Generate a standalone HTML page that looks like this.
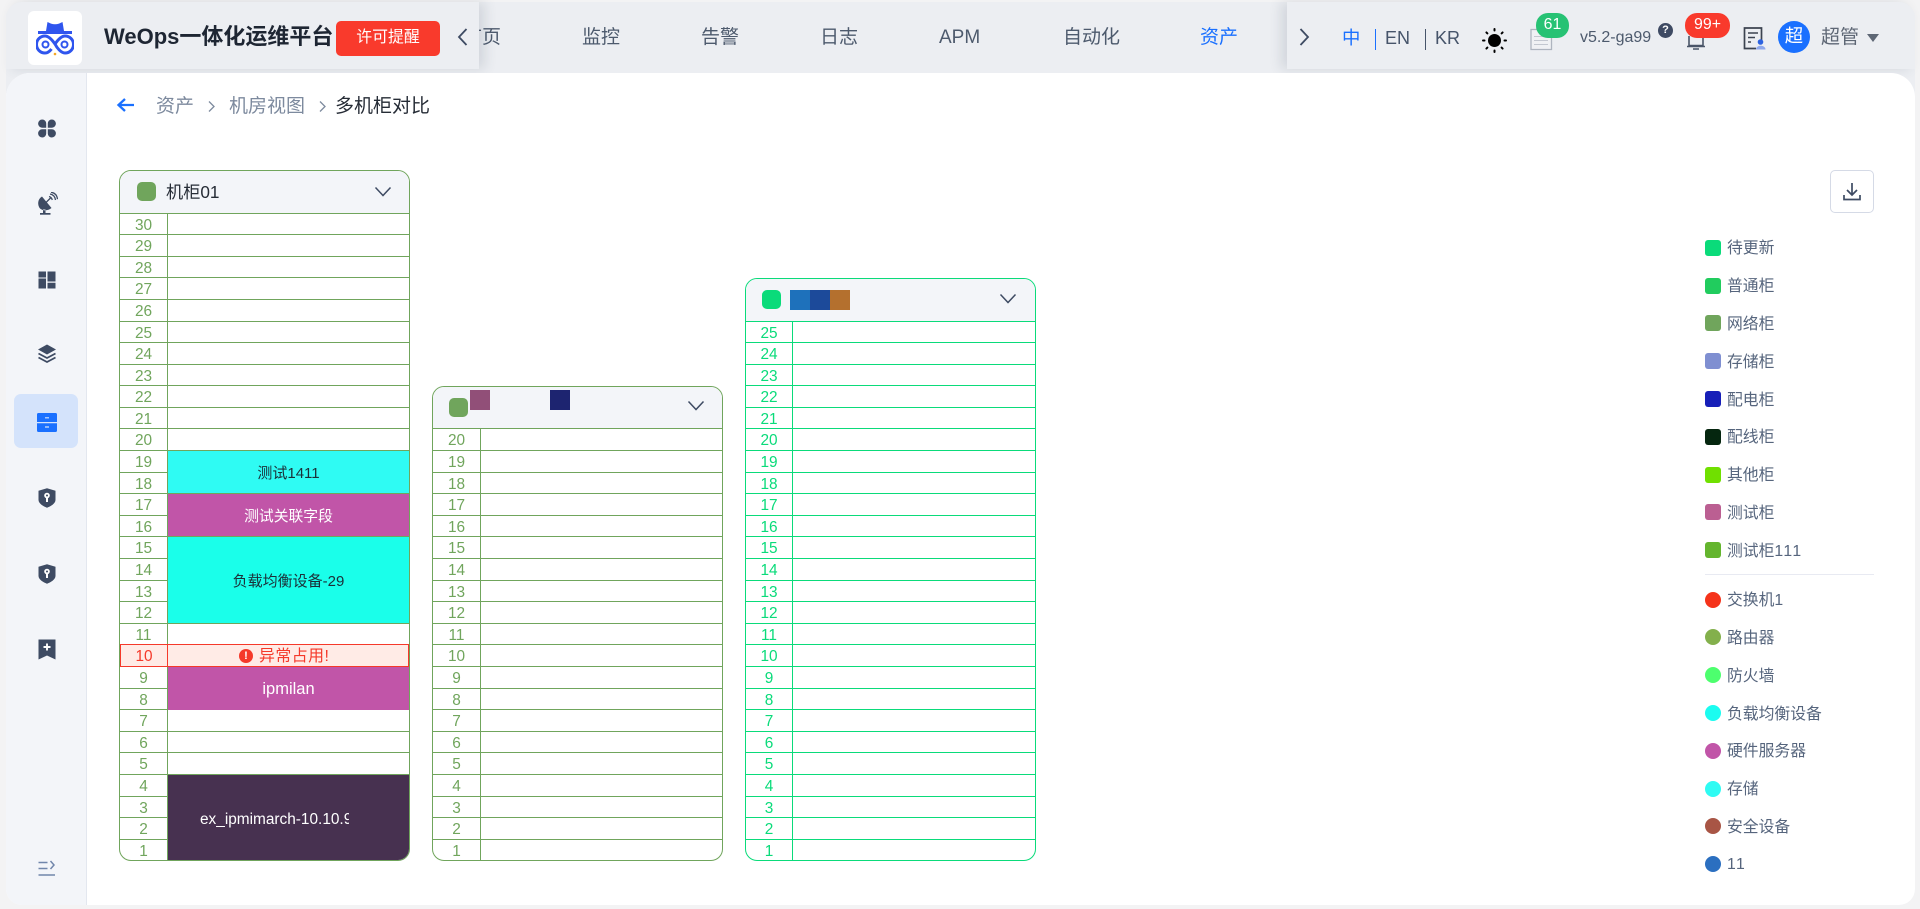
<!DOCTYPE html>
<html lang="zh-CN">
<head>
<meta charset="utf-8">
<title>WeOps</title>
<style>
*{box-sizing:border-box;margin:0;padding:0}
html,body{width:1920px;height:909px;overflow:hidden;background:#f3f3f4;font-family:"Liberation Sans","Noto Sans CJK SC",sans-serif}
.abs,.t,svg.i{position:absolute}
.t{white-space:nowrap;line-height:24px;height:24px}
#frame{position:absolute;left:6px;top:2px;width:1909px;height:903px;background:#eceef2;border-radius:16px;overflow:hidden}
#content{position:absolute;left:6px;top:73px;width:1909px;height:832px;background:#fff;border-radius:24px 24px 16px 16px;overflow:hidden}
#side{position:absolute;left:0;top:0;width:81px;height:100%;background:#f3f5f9;border-right:1px solid #e3e7ef}
.panel{position:absolute;top:2px;height:67px;background:#eceef2}
.nav{font-size:19px;color:#4d5a6d;top:26px}
.cab{position:absolute;width:291px;border:1px solid #70a55c;border-radius:12px;overflow:hidden;background:#fff;color:#70a55c;font-size:15.4px}
.cab.g{border-color:#0adb7a;color:#0adb7a}
.h{height:43px;background:#f3f5f9;border-bottom:1px solid #70a55c;position:relative}
.g .h{border-color:#0adb7a}
.r{display:block;border-bottom:1px solid #70a55c}
.g .r{border-color:#0adb7a}
.a{height:21px}.b{height:22px}
.r b{display:block;font-weight:400;width:48px;height:100%;border-right:1px solid #70a55c;text-align:center;line-height:24px;overflow:hidden}
.g .r b{width:47px;border-color:#0adb7a}
.r:last-child{border-bottom:0}
.sw{position:absolute;width:19px;height:19px;border-radius:5px}
.sq{position:absolute;width:20px;height:20px}
.d{position:absolute;left:48px;width:241px;display:flex;align-items:center;justify-content:center;font-size:15px;color:#1c2f38}
.w{color:#fff}
.lg{position:absolute;left:1705px;width:16px;height:16px;border-radius:3px}
.c{border-radius:50%}
.lt{position:absolute;left:1727px;font-size:15.8px;color:#56657d;line-height:22px;height:22px;white-space:nowrap;margin-top:1px}
.lt i{font-style:normal;letter-spacing:1.4px}
.ic{fill:#3e4b63}
</style>
</head>
<body>
<div id="frame"></div>

<!-- nav items -->
<span class="t nav" style="left:479px;width:22px;overflow:hidden;direction:rtl">首页</span>
<span class="t nav" style="left:582px">监控</span>
<span class="t nav" style="left:701px">告警</span>
<span class="t nav" style="left:820px">日志</span>
<span class="t nav" style="left:939px">APM</span>
<span class="t nav" style="left:1063px">自动化</span>
<span class="t nav" style="left:1200px;color:#1a70ff">资产</span>

<!-- left header panel -->
<div class="panel" style="left:6px;width:473px;box-shadow:6px 0 12px rgba(60,70,90,.14);border-radius:16px 0 0 0"></div>
<div class="abs" style="left:28px;top:11px;width:54px;height:54px;background:#fff;border-radius:6px"></div>
<svg class="i" style="left:36px;top:20px" width="38" height="36" viewBox="0 0 38 36">
<path fill="#2f55ee" d="M10 11 11.500 2 15 3.600Q19 5 23 3.600L26.500 2 28 11Z"/>
<path fill="#2f55ee" d="M2 11H36V14H2Z"/>
<path fill="none" stroke="#2f55ee" stroke-width="3" d="M19 24C15.500 19 12.500 16 9 16A8.500 8.500 0 0 0 9 33C12 33 14 31 15.500 29M19 24C22.500 19 25.500 16 29 16A8.500 8.500 0 0 1 29 33C25 33 21 28 19 24Z"/>
<circle cx="9.500" cy="24.500" r="3" fill="none" stroke="#2f55ee" stroke-width="2"/>
<circle cx="28.500" cy="24.500" r="3" fill="none" stroke="#2f55ee" stroke-width="2"/>
<circle cx="19" cy="34" r="1.300" fill="#f5a623"/>
</svg>
<span class="t" style="left:104px;top:24px;font-size:22px;font-weight:700;color:#1e2633;line-height:26px;height:26px">WeOps一体化运维平台</span>
<div class="abs" style="left:336px;top:21px;width:104px;height:35px;background:#f93a2c;border-radius:5px;color:#fff;font-size:15.900px;line-height:34px;text-align:center">许可提醒</div>
<svg class="i" style="left:456px;top:27px" width="14" height="20" viewBox="0 0 14 20"><path d="M10.500 2 3 10l7.500 8" fill="none" stroke="#3e4b63" stroke-width="1.800"/></svg>

<!-- right header panel -->
<div class="panel" style="left:1287px;width:628px;box-shadow:-6px 0 12px rgba(60,70,90,.14);border-radius:0 16px 0 0"></div>
<svg class="i" style="left:1297px;top:27px" width="14" height="20" viewBox="0 0 14 20"><path d="M3.500 2 11 10l-7.500 8" fill="none" stroke="#3e4b63" stroke-width="1.800"/></svg>
<span class="t" style="left:1342px;top:26px;font-size:18.400px;color:#1a70ff">中</span>
<div class="abs" style="left:1375px;top:29px;width:1px;height:21px;background:#1a70ff"></div>
<span class="t" style="left:1385px;top:26px;font-size:18px;color:#46546a">EN</span>
<div class="abs" style="left:1425px;top:29px;width:1px;height:21px;background:#46546a"></div>
<span class="t" style="left:1435px;top:26px;font-size:18px;color:#46546a">KR</span>
<svg class="i" style="left:1482px;top:28px" width="25" height="25" viewBox="0 0 25 25">
<circle cx="12.500" cy="12.500" r="6.500" fill="#000"/>
<g stroke="#000" stroke-width="2" stroke-linecap="round"><path d="M12.500 1v1.500M12.500 22.500V24M1 12.500h1.500M22.500 12.500H24M4.400 4.400l1 1M19.600 19.600l1 1M4.400 20.600l1-1M19.600 5.400l1-1"/></g>
</svg>
<svg class="i" style="left:1530px;top:27px" width="23" height="24" viewBox="0 0 23 24">
<path d="M1 2.500h20.500v20H1Z" fill="#f0f1f4" stroke="#aeb4bf" stroke-width="1.300"/>
<path d="M4 9.500h14M4 13.500h14M4 17.500h14" stroke="#c3c7d0" stroke-width="1"/>
</svg>
<div class="abs" style="left:1536px;top:13px;width:33px;height:25px;background:#27c274;border-radius:12px;color:#fff;font-size:15.900px;line-height:24px;text-align:center">61</div>
<span class="t" style="left:1580px;top:26px;font-size:16px;color:#4d5a6d">v5.2-ga99</span>
<div class="abs" style="left:1658px;top:23px;width:15px;height:15px;background:#3e4a63;border-radius:50%;color:#fff;font-size:11px;line-height:15px;text-align:center;font-weight:700">?</div>
<svg class="i" style="left:1686px;top:36px" width="20" height="14" viewBox="0 0 20 14">
<path d="M3 0v9.500h14V0" fill="none" stroke="#4a5568" stroke-width="1.600"/><path d="M1 10.500h18M7 13h6" stroke="#4a5568" stroke-width="1.500"/>
</svg>
<div class="abs" style="left:1685px;top:13px;width:45px;height:25px;background:#f93a2c;border-radius:12px;color:#fff;font-size:15.900px;line-height:24px;text-align:center">99+</div>
<svg class="i" style="left:1743px;top:26px" width="23" height="24" viewBox="0 0 23 24">
<path d="M18.500 14V2H1.500V22.500H13" fill="none" stroke="#3c4350" stroke-width="1.700"/>
<path d="M5 7h10M5 11.500h7M5 16h3" stroke="#3c4350" stroke-width="1.500"/>
<circle cx="17.500" cy="16" r="2.800" fill="#2c62e0"/><path d="M13 23.500c0-5 9.500-5 9.500 0Z" fill="#8fa8ec"/>
</svg>
<div class="abs" style="left:1778px;top:21px;width:32px;height:32px;background:#1a70ff;border-radius:50%;color:#fff;font-size:18.400px;line-height:30px;text-align:center">超</div>
<span class="t" style="left:1821px;top:26px;font-size:19px;color:#5e6775">超管</span>
<svg class="i" style="left:1867px;top:34px" width="12" height="8" viewBox="0 0 12 8"><path d="M0 0h12L6 8Z" fill="#5e6775"/></svg>

<!-- content -->
<div id="content"><div id="side"></div></div>
<div class="abs" style="left:14px;top:394px;width:64px;height:54px;background:#d4e3fb;border-radius:7px"></div>

<!-- sidebar icons -->
<svg class="i" style="left:38px;top:119px" width="18" height="19" viewBox="0 0 18 19">
<path class="ic" d="M4.200 .5A4 4 0 0 0 4.200 8.700H8.200V4.500A4 4 0 0 0 4.200 .5ZM13.800 .5A4 4 0 0 1 13.800 8.700H9.800V4.500A4 4 0 0 1 13.800 .5ZM4.200 18.500A4 4 0 0 1 4.200 10.300H8.200V14.500A4 4 0 0 1 4.200 18.500ZM13.800 18.500A4 4 0 0 0 13.800 10.300H9.800V14.500A4 4 0 0 0 13.800 18.500Z"/>
</svg>
<svg class="i" style="left:37px;top:192px" width="21" height="24" viewBox="0 0 21 24">
<path class="ic" d="M5 4.500C.5 7 .200 13 3 16.500C6 19 11 19 14.500 16ZM6 17.500h2.500V21H6Z"/>
<path class="ic" d="M3 21h10.500v1.700H3Z"/>
<path d="M8.500 11 14 5.500M13 2C16 2.500 18 4.500 18.500 8M14 .2C18 .8 20 3 20.500 7.200M12 4.500C13.500 4.800 14.800 5.800 15.200 8" fill="none" stroke="#3e4b63" stroke-width="1.300"/>
</svg>
<svg class="i" style="left:38px;top:271px" width="18" height="18" viewBox="0 0 18 18">
<path class="ic" d="M.5 .5h7.500v6H.5ZM.5 7.500h7.500V17.500H.5ZM9.500 .5H17.500V10.500H9.500ZM9.500 11.800H17.500V17.500H9.500Z"/>
</svg>
<svg class="i" style="left:37px;top:344px" width="20" height="20" viewBox="0 0 20 20">
<path class="ic" d="M10 .5 19 5.500 10 10.500 1 5.500Z"/>
<path d="M1.500 9.500 10 14 18.500 9.500M1.500 13.500 10 18 18.500 13.500" fill="none" stroke="#3e4b63" stroke-width="1.700"/>
</svg>
<svg class="i" style="left:37px;top:413px" width="20" height="20" viewBox="0 0 20 20">
<path fill="#1a70ff" d="M1.500 0H18.500A1.500 1.500 0 0 1 20 1.500V9H0V1.500A1.500 1.500 0 0 1 1.500 0ZM0 10.200H20V17.500A1.500 1.500 0 0 1 18.500 19H1.500A1.500 1.500 0 0 1 0 17.500Z"/>
<path d="M8 4.800h4M8 14h4" stroke="#d4e3fb" stroke-width="1.200"/>
</svg>
<svg class="i" style="left:38px;top:488px" width="18" height="20" viewBox="0 0 18 20">
<path class="ic" d="M9 .3 17.500 2.800V12C17.500 15.500 12.500 18.500 9 19.700 5.500 18.500.5 15.500.5 12V2.800Z"/>
<circle cx="9" cy="7.500" r="2.800" fill="#fff"/><path d="M8 9h2v5H8Z" fill="#fff"/><circle cx="9" cy="7.500" r="1" fill="#3e4b63"/>
</svg>
<svg class="i" style="left:38px;top:564px" width="18" height="20" viewBox="0 0 18 20">
<path class="ic" d="M9 .3 17.500 2.800V12C17.500 15.500 12.500 18.500 9 19.700 5.500 18.500.5 15.500.5 12V2.800Z"/>
<circle cx="9" cy="7.500" r="2.800" fill="#fff"/><path d="M8 9h2v5H8Z" fill="#fff"/><circle cx="9" cy="7.500" r="1" fill="#3e4b63"/>
</svg>
<svg class="i" style="left:38px;top:639px" width="18" height="21" viewBox="0 0 18 21">
<path class="ic" d="M.5 .5H17.500V20.500L9 16.500 .5 20.500Z"/>
<path d="M9 4.500v7M5.500 8h7" stroke="#fff" stroke-width="1.900"/>
</svg>
<svg class="i" style="left:38px;top:860px" width="18" height="17" viewBox="0 0 18 17">
<path d="M.5 2.500h9M.5 8.500h9M.5 15h16.500M12.500 1 16 5 12.500 9" fill="none" stroke="#7186ab" stroke-width="1.500"/>
</svg>

<!-- breadcrumb -->
<svg class="i" style="left:116px;top:96px" width="19" height="18" viewBox="0 0 19 18"><path d="M18 9H3M9 3 2.500 9 9 15" fill="none" stroke="#1a70ff" stroke-width="2.300"/></svg>
<span class="t" style="left:156px;top:95px;font-size:19px;color:#7d8a9e">资产</span>
<svg class="i" style="left:207px;top:100px" width="9" height="13" viewBox="0 0 9 13"><path d="M2 1.500 7 6.500 2 11.500" fill="none" stroke="#7d8a9e" stroke-width="1.300"/></svg>
<span class="t" style="left:229px;top:95px;font-size:19px;color:#7d8a9e">机房视图</span>
<svg class="i" style="left:318px;top:100px" width="9" height="13" viewBox="0 0 9 13"><path d="M2 1.500 7 6.500 2 11.500" fill="none" stroke="#7d8a9e" stroke-width="1.300"/></svg>
<span class="t" style="left:335px;top:95px;font-size:19px;color:#262c36">多机柜对比</span>

<!-- cabinet 1 -->
<div class="cab" style="left:119px;top:170px;height:691px">
<div class="h"><span class="sw" style="left:17px;top:11px;background:#70a55c"></span>
<span class="t" style="left:46px;top:9px;font-size:17.200px;color:#262c36">机柜01</span>
<svg class="i" style="left:254px;top:15px" width="18" height="12" viewBox="0 0 18 12"><path d="M1.500 1.500 9 9.500 16.500 1.500" fill="none" stroke="#3e4b63" stroke-width="1.500"/></svg></div>
<div class="r a"><b>30</b></div><div class="r b"><b>29</b></div><div class="r a"><b>28</b></div><div class="r b"><b>27</b></div><div class="r b"><b>26</b></div><div class="r a"><b>25</b></div><div class="r b"><b>24</b></div><div class="r a"><b>23</b></div><div class="r b"><b>22</b></div><div class="r a"><b>21</b></div><div class="r b"><b>20</b></div><div class="r b"><b>19</b></div><div class="r a"><b>18</b></div><div class="r b"><b>17</b></div><div class="r a"><b>16</b></div><div class="r b"><b>15</b></div><div class="r b"><b>14</b></div><div class="r a"><b>13</b></div><div class="r b"><b>12</b></div><div class="r a"><b>11</b></div><div class="r b"><b>10</b></div><div class="r b"><b>9</b></div><div class="r a"><b>8</b></div><div class="r b"><b>7</b></div><div class="r a"><b>6</b></div><div class="r b"><b>5</b></div><div class="r b"><b>4</b></div><div class="r a"><b>3</b></div><div class="r b"><b>2</b></div><div class="r a"><b>1</b></div>
<div class="d" style="top:280px;height:42px;background:#2ffbf3">测试1411</div>
<div class="d w" style="top:323px;height:42px;background:#c155a8;font-size:14.8px">测试关联字段</div>
<div class="d" style="top:366px;height:86px;background:#1affea">负载均衡设备-29</div>
<div class="abs" style="left:0;top:473px;width:289px;height:23px;background:#ffebe6;border:1px solid #f5392a;color:#f5392a"><span class="abs" style="left:0;top:0;width:47px;height:21px;border-right:1px solid #f5392a;line-height:24px;text-align:center;overflow:hidden">10</span>
<span class="abs" style="left:118px;top:4px;width:14px;height:14px;background:#f5392a;border-radius:50%;color:#fff;font-size:11px;font-weight:700;line-height:14px;text-align:center">!</span>
<span class="t" style="left:138px;top:1px;font-size:15.900px;color:#f5392a;letter-spacing:.5px;line-height:22px;height:22px">异常占用!</span></div>
<div class="d w" style="top:497px;height:42px;background:#c155a8;font-size:16.500px;background-clip:padding-box;box-shadow:0 -1px 0 #c155a8">ipmilan</div>
<div class="d w" style="top:604px;height:85px;background:#473150;justify-content:flex-start;font-size:15.400px"><span style="margin-left:32px;width:149px;overflow:hidden;white-space:nowrap;display:block;position:relative;top:2px">ex_ipmimarch-10.10.9.1</span></div>
</div>

<!-- cabinet 2 -->
<div class="cab" style="left:432px;top:386px;height:475px">
<div class="h" style="height:42px"><span class="sw" style="left:16px;top:11px;background:#70a55c"></span>
<span class="sq" style="left:37px;top:3px;background:#914f78"></span><span class="sq" style="left:117px;top:3px;background:#1d2470"></span>
<svg class="i" style="left:254px;top:13px" width="18" height="12" viewBox="0 0 18 12"><path d="M1.500 1.500 9 9.500 16.500 1.500" fill="none" stroke="#3e4b63" stroke-width="1.500"/></svg></div>
<div class="r b"><b>20</b></div><div class="r b"><b>19</b></div><div class="r a"><b>18</b></div><div class="r b"><b>17</b></div><div class="r a"><b>16</b></div><div class="r b"><b>15</b></div><div class="r b"><b>14</b></div><div class="r a"><b>13</b></div><div class="r b"><b>12</b></div><div class="r a"><b>11</b></div><div class="r b"><b>10</b></div><div class="r b"><b>9</b></div><div class="r a"><b>8</b></div><div class="r b"><b>7</b></div><div class="r a"><b>6</b></div><div class="r b"><b>5</b></div><div class="r b"><b>4</b></div><div class="r a"><b>3</b></div><div class="r b"><b>2</b></div><div class="r a"><b>1</b></div>
</div>

<!-- cabinet 3 -->
<div class="cab g" style="left:745px;top:278px;height:583px">
<div class="h"><span class="sw" style="left:16px;top:11px;background:#0adb7a"></span>
<span class="sq" style="left:44px;top:11px;background:#1e71bb"></span><span class="sq" style="left:64px;top:11px;background:#1c4a9a"></span><span class="sq" style="left:84px;top:11px;background:#b4702e"></span>
<svg class="i" style="left:253px;top:14px" width="18" height="12" viewBox="0 0 18 12"><path d="M1.500 1.500 9 9.500 16.500 1.500" fill="none" stroke="#3e4b63" stroke-width="1.500"/></svg></div>
<div class="r a"><b>25</b></div><div class="r b"><b>24</b></div><div class="r a"><b>23</b></div><div class="r b"><b>22</b></div><div class="r a"><b>21</b></div><div class="r b"><b>20</b></div><div class="r b"><b>19</b></div><div class="r a"><b>18</b></div><div class="r b"><b>17</b></div><div class="r a"><b>16</b></div><div class="r b"><b>15</b></div><div class="r b"><b>14</b></div><div class="r a"><b>13</b></div><div class="r b"><b>12</b></div><div class="r a"><b>11</b></div><div class="r b"><b>10</b></div><div class="r b"><b>9</b></div><div class="r a"><b>8</b></div><div class="r b"><b>7</b></div><div class="r a"><b>6</b></div><div class="r b"><b>5</b></div><div class="r b"><b>4</b></div><div class="r a"><b>3</b></div><div class="r b"><b>2</b></div><div class="r a"><b>1</b></div>
</div>

<!-- download -->
<div class="abs" style="left:1830px;top:170px;width:44px;height:43px;border:1px solid #d5dae6;border-radius:5px;background:#fff"></div>
<svg class="i" style="left:1843px;top:182px" width="18" height="19" viewBox="0 0 18 19"><path d="M9 1V13M4 8 9 13 14 8" fill="none" stroke="#3e4b63" stroke-width="1.700"/><path d="M1 13v4.500H17V13" fill="none" stroke="#3e4b63" stroke-width="1.700"/></svg>

<!-- legend -->
<span class="lg" style="top:240px;background:#0adb7a"></span><span class="lt" style="top:237px">待更新</span>
<span class="lg" style="top:278px;background:#21cc5e"></span><span class="lt" style="top:275px">普通柜</span>
<span class="lg" style="top:315px;background:#70a55c"></span><span class="lt" style="top:313px">网络柜</span>
<span class="lg" style="top:353px;background:#7f8fd1"></span><span class="lt" style="top:351px">存储柜</span>
<span class="lg" style="top:391px;background:#171fb8"></span><span class="lt" style="top:389px">配电柜</span>
<span class="lg" style="top:429px;background:#05260f"></span><span class="lt" style="top:426px">配线柜</span>
<span class="lg" style="top:467px;background:#70e000"></span><span class="lt" style="top:464px">其他柜</span>
<span class="lg" style="top:504px;background:#bb5f92"></span><span class="lt" style="top:502px">测试柜</span>
<span class="lg" style="top:542px;background:#64b52e"></span><span class="lt" style="top:540px">测试柜<i>111</i></span>
<div class="abs" style="left:1705px;top:574px;width:169px;height:1px;background:#e8eaf2"></div>
<span class="lg c" style="top:592px;background:#f5331a"></span><span class="lt" style="top:589px">交换机<i>1</i></span>
<span class="lg c" style="top:629px;background:#83b04c"></span><span class="lt" style="top:627px">路由器</span>
<span class="lg c" style="top:667px;background:#4dff6e"></span><span class="lt" style="top:665px">防火墙</span>
<span class="lg c" style="top:705px;background:#1bfcf0"></span><span class="lt" style="top:703px">负载均衡设备</span>
<span class="lg c" style="top:743px;background:#c155a8"></span><span class="lt" style="top:740px">硬件服务器</span>
<span class="lg c" style="top:781px;background:#2ffbf3"></span><span class="lt" style="top:778px">存储</span>
<span class="lg c" style="top:818px;background:#a85545"></span><span class="lt" style="top:816px">安全设备</span>
<span class="lg c" style="top:856px;background:#2b6fc0"></span><span class="lt" style="top:853px"><i>11</i></span>
</body>
</html>
